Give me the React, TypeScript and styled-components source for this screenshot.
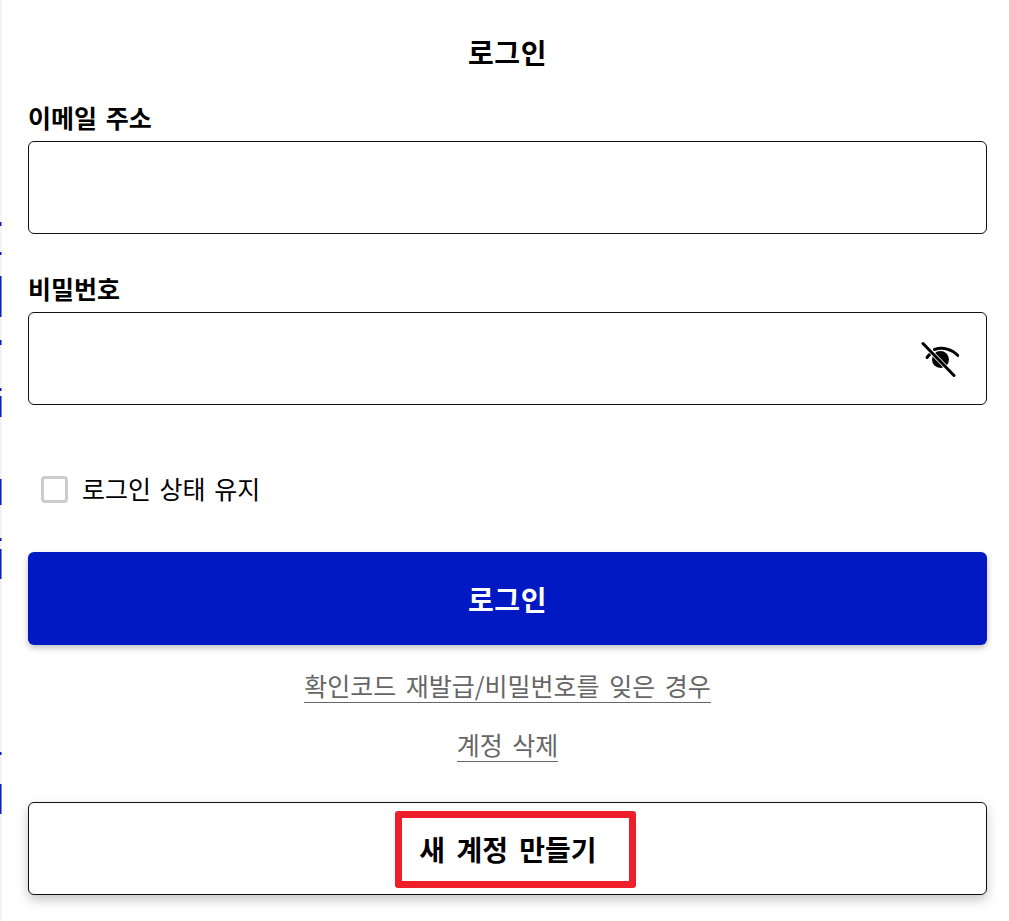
import styled, { createGlobalStyle } from "styled-components";

const GlobalStyle = createGlobalStyle`
  * {
    box-sizing: border-box;
  }
  body {
    margin: 0;
    background: #fff;
    font-family: "Noto Sans CJK KR", "Noto Sans", sans-serif;
    color: #000;
  }
`;

const EDGE_MARKS = [
  [222, 4],
  [252, 3],
  [276, 41],
  [340, 5],
  [388, 3],
  [396, 21],
  [479, 26],
  [538, 3],
  [549, 30],
  [752, 3],
  [784, 30],
];

const App = () => {
  return (
    <Page>
      <GlobalStyle />
      <EdgeStrip width="3" height="921" aria-hidden="true">
        <rect x="0" y="0" width="1.5" height="921" fill="#f0f0f5" />
        {EDGE_MARKS.map(([y, h]) => (
          <rect key={y} x="0" y={y} width="1.5" height={h} fill="#0a1ec4" />
        ))}
      </EdgeStrip>
      <Title>로그인</Title>
      <Field>
        <Label>이메일 주소</Label>
        <InputBox />
      </Field>
      <Field>
        <Label>비밀번호</Label>
        <InputBox>
          <EyeIcon viewBox="0 0 38 36" fill="none" stroke="#000" strokeLinecap="round">
            <path d="M6 16.500C7.500 14.500 9 13 11 11.500" strokeWidth="3" />
            <path d="M13.500 8.500C22 5.500 31 8.500 37 14.500" strokeWidth="3" />
            <circle cx="19.500" cy="18.500" r="8.500" fill="#000" stroke="none" />
            <path d="M2 2.500l31 32" stroke="#fff" strokeWidth="4.500" />
            <path d="M2 2.500l31 32" strokeWidth="3" />
          </EyeIcon>
        </InputBox>
      </Field>
      <KeepRow>
        <CheckBox />
        <KeepLabel>로그인 상태 유지</KeepLabel>
      </KeepRow>
      <LoginButton>로그인</LoginButton>
      <LinkRow>
        <TextLink>확인코드 재발급/비밀번호를 잊은 경우</TextLink>
        <TextLink>계정 삭제</TextLink>
      </LinkRow>
      <CreateButton>
        <Highlight>새 계정 만들기</Highlight>
      </CreateButton>
    </Page>
  );
};

export default App;

const Page = styled.main`
  position: relative;
  width: 1009px;
  height: 921px;
  padding: 32px 22px 0 28px;
  overflow: hidden;
`;

const EdgeStrip = styled.svg`
  position: absolute;
  left: 0;
  top: 0;
`;

const Title = styled.h1`
  margin: 0 0 27px;
  font-size: 28px;
  letter-spacing: 0.5px;
  line-height: 40px;
  font-weight: 700;
  text-align: center;
`;

const Field = styled.div`
  margin-bottom: 36px;
`;

const Label = styled.div`
  font-size: 25px;
  word-spacing: 3px;
  line-height: 36px;
  font-weight: 700;
  margin-bottom: 6px;
`;

const InputBox = styled.div`
  height: 93px;
  border: 1px solid #111;
  border-radius: 6px;
  background: #fff;
  display: flex;
  align-items: center;
  justify-content: flex-end;
  padding-right: 27px;
`;

const EyeIcon = styled.svg`
  width: 38px;
  height: 36px;
`;

const KeepRow = styled.label`
  display: flex;
  align-items: center;
  gap: 14px;
  margin: 66px 0 45px 13px;
`;

const CheckBox = styled.span`
  width: 27px;
  height: 27px;
  border: 3.5px solid #ccc;
  border-radius: 4px;
`;

const KeepLabel = styled.span`
  font-size: 25px;
  word-spacing: 3px;
  line-height: 34px;
  padding-bottom: 2px;
`;

const LoginButton = styled.button`
  display: block;
  width: 100%;
  height: 93px;
  border: 0;
  border-radius: 6px;
  background: #0019c3;
  color: #fff;
  font: 700 28px "Noto Sans CJK KR", sans-serif;
  letter-spacing: 0.5px;
  box-shadow: 0 3px 6px rgba(0, 0, 0, 0.25);
`;

const LinkRow = styled.div`
  display: flex;
  flex-direction: column;
  align-items: center;
  gap: 24px;
  margin-top: 23px;
`;

const TextLink = styled.a`
  font-size: 25px;
  word-spacing: 4px;
  line-height: 34px;
  color: #666;
  border-bottom: 1px solid #666;
`;

const CreateButton = styled.div`
  height: 93px;
  margin-top: 40px;
  border: 1px solid #111;
  border-radius: 6px;
  background: #fff;
  box-shadow: 0 5px 12px rgba(0, 0, 0, 0.22);
  display: flex;
  align-items: center;
  justify-content: center;
`;

const Highlight = styled.div`
  width: 241px;
  height: 77px;
  margin: 1px 0 0 15px;
  padding-right: 14px;
  border: 7px solid #ee1f2b;
  border-radius: 3px;
  display: flex;
  align-items: center;
  justify-content: center;
  font-size: 28px;
  word-spacing: 5px;
  font-weight: 700;
`;
